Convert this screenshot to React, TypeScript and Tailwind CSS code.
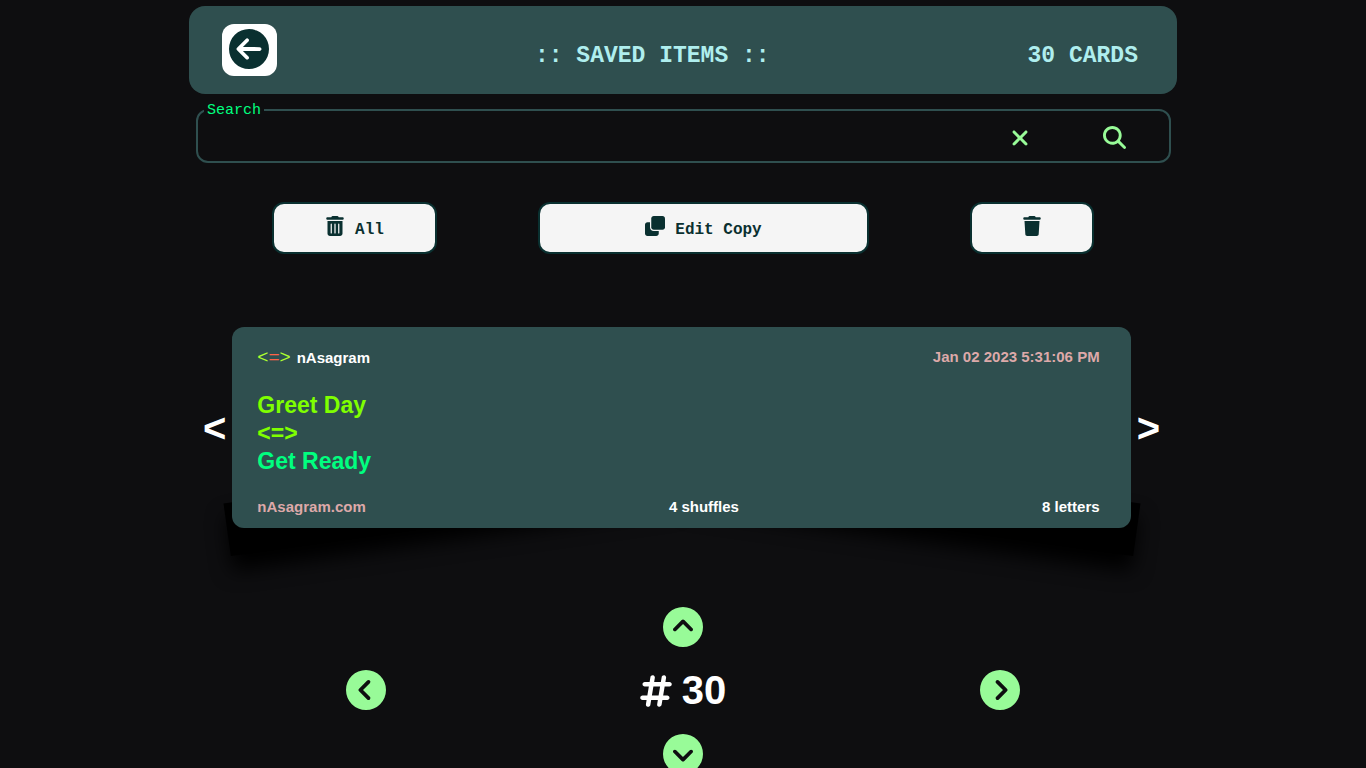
import { useState } from "react";
import {
    FaCircleArrowLeft,
    FaCircleChevronDown,
    FaCircleChevronLeft,
    FaCircleChevronRight,
    FaCircleChevronUp,
    FaHashtag,
    FaMagnifyingGlass,
    FaTrash,
    FaTrashCan,
    FaXmark,
} from "react-icons/fa6";

const TOTAL = 30;

const actionButton =
    "h-[52px] flex items-center justify-center gap-2.5 rounded-xl border-2 border-[#0a3030] bg-[#f5f5f5] pt-1 text-[#0a3030] font-['Liberation_Mono',monospace] text-base font-bold";

// Clone icon with a solid back sheet
function CloneIcon() {
    return (
        <svg viewBox="0 0 512 512" className="-mt-2 size-5" fill="currentColor" aria-hidden="true">
            <path d="M0 224C0 188.7 28.65 160 64 160H128V288C128 341 170.1 384 224 384H352V448C352 483.3 323.3 512 288 512H64C28.65 512 0 483.3 0 448V224z" />
            <path d="M224 352C188.7 352 160 323.3 160 288V64C160 28.65 188.7 0 224 0H448C483.3 0 512 28.65 512 64V288C512 323.3 483.3 352 448 352H224z" />
        </svg>
    );
}

function Header() {
    return (
        <header className="flex h-[88px] items-center justify-between rounded-2xl bg-[#2f4f4f] pr-[39px] pl-[33px] font-['Liberation_Mono',monospace] text-[23px] font-bold text-[#afeeee]">
            <button
                aria-label="Back"
                className="w-[55px] rounded-xl bg-white px-[7px] pt-[5px] pb-[7px] text-[#0a3030]"
            >
                <FaCircleArrowLeft size={40} />
            </button>
            <h1 className="pt-3">:: SAVED ITEMS ::</h1>
            <p className="pt-3">{TOTAL} CARDS</p>
        </header>
    );
}

function SearchBox() {
    const [query, setQuery] = useState("");

    return (
        <fieldset className="mt-[7px] mr-1.5 ml-[7px] rounded-xl border-2 border-[#2f4f4f] pl-1.5 font-['Liberation_Mono',monospace] text-[15px]">
            <legend className="px-[3px] pt-0.5 leading-4 text-[#00ff7f]">
                <label htmlFor="search">Search</label>
            </legend>
            <div className="flex h-[42px] items-start pt-[7px] pr-[43px]">
                <input
                    id="search"
                    value={query}
                    onChange={(e) => setQuery(e.target.value)}
                    className="h-6 min-w-0 flex-1 bg-transparent text-white outline-none"
                />
                <div className="flex items-start gap-[71px] text-[#98fb98]">
                    <button aria-label="Clear search" onClick={() => setQuery("")}>
                        <FaXmark size={24} />
                    </button>
                    <button aria-label="Run search">
                        <FaMagnifyingGlass size={23} />
                    </button>
                </div>
            </div>
        </fieldset>
    );
}

function Actions() {
    return (
        <div className="mx-[83px] mt-[39px] flex justify-between">
            <button className={`${actionButton} w-[165px]`}>
                <FaTrashCan size={20} className="-mt-2" />
                All
            </button>
            <button className={`${actionButton} w-[331px]`}>
                <CloneIcon />
                Edit Copy
            </button>
            <button aria-label="Delete card" className={`${actionButton} w-[124px]`}>
                <FaTrash size={20} className="-mt-2" />
            </button>
        </div>
    );
}

function Card() {
    return (
        <div className="relative z-0 min-w-0 flex-1">
            {/* Lifted corner shadows behind the card */}
            <div className="absolute bottom-[3px] -left-[7px] -z-10 h-[53px] w-1/2 -rotate-8 bg-black shadow-[0_15px_20px_#000]" />
            <div className="absolute -right-2 bottom-[3px] -z-10 h-[53px] w-1/2 rotate-8 bg-black shadow-[0_15px_20px_#000]" />
            <article className="h-[201px] rounded-xl bg-[#2f4f4f] pt-5 pr-[31px] pl-[25px] text-[15px] leading-5 font-bold text-white">
                <div className="flex h-5 items-start justify-between">
                    <div className="flex items-baseline gap-1.5">
                        <span className="text-[19px] leading-5 font-normal text-[#adff2f]">
                            &lt;<span className="text-[#ff6347]">=</span>&gt;
                        </span>
                        nAsagram
                    </div>
                    <time className="text-[#dda9a9]">Jan 02 2023 5:31:06 PM</time>
                </div>
                <div className="mt-6 text-[23px] leading-7 text-[#7fff00]">
                    <p>Greet Day</p>
                    <p>&lt;=&gt;</p>
                    <p className="text-[#00ff7f]">Get Ready</p>
                </div>
                <div className="mt-[22px] flex justify-between">
                    <a href="#" className="text-[#dda9a9]">
                        nAsagram.com
                    </a>
                    <span>4 shuffles</span>
                    <span>8 letters</span>
                </div>
            </article>
        </div>
    );
}

function Pager() {
    const round = "rounded-full text-[#98fb98]";

    return (
        <nav className="mx-[19px] mt-[79px] grid grid-cols-3 items-start justify-items-center gap-y-[23px] pb-6">
            <button aria-label="First card" className={`${round} col-start-2`}>
                <FaCircleChevronUp size={40} />
            </button>
            <button aria-label="Previous card" className={`${round} col-start-1`}>
                <FaCircleChevronLeft size={40} />
            </button>
            <p className="flex items-center gap-2 pr-0.5 text-[40px] leading-[41px] font-bold text-white">
                <FaHashtag size={36} />
                {TOTAL}
            </p>
            <button aria-label="Next card" className={round}>
                <FaCircleChevronRight size={40} />
            </button>
            <button aria-label="Last card" className={`${round} col-start-2`}>
                <FaCircleChevronDown size={40} />
            </button>
        </nav>
    );
}

export default function App() {
    return (
        <div className="min-h-screen bg-[#0e0e10] px-4 pt-1.5 font-['Liberation_Sans',sans-serif]">
            <main className="mx-auto w-full max-w-[988px]">
                <Header />
                <SearchBox />
                <Actions />
                <div className="mt-[73px] mr-[17px] ml-3.5 flex items-center gap-1.5 text-[40px] font-bold text-white">
                    <button aria-label="Previous">&lt;</button>
                    <Card />
                    <button aria-label="Next">&gt;</button>
                </div>
                <Pager />
            </main>
        </div>
    );
}
